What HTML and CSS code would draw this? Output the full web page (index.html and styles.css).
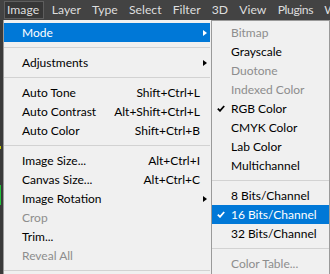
FILE: index.html
```html
<!DOCTYPE html>
<html>
<head>
<meta charset="utf-8">
<link rel="stylesheet" href="styles.css">
</head>
<body>
<div class="menubar">
  <span class="mb-item active">Image</span>
  <span class="mb-item">Layer</span>
  <span class="mb-item">Type</span>
  <span class="mb-item">Select</span>
  <span class="mb-item">Filter</span>
  <span class="mb-item">3D</span>
  <span class="mb-item">View</span>
  <span class="mb-item narrow">Plugins</span>
  <span class="mb-item">Window</span>
</div>
<div class="workspace">
  <div class="edge"></div>
  <div class="menu main-menu">
    <div class="row hl"><span class="label">Mode</span><span class="key"></span><span class="arrow-cell"><i class="arrow"></i></span></div>
    <div class="sep"></div>
    <div class="row"><span class="label">Adjustments</span><span class="key"></span><span class="arrow-cell"><i class="arrow"></i></span></div>
    <div class="sep"></div>
    <div class="row"><span class="label">Auto Tone</span><span class="key">Shift+Ctrl+L</span><span class="arrow-cell"></span></div>
    <div class="row"><span class="label">Auto Contrast</span><span class="key">Alt+Shift+Ctrl+L</span><span class="arrow-cell"></span></div>
    <div class="row"><span class="label">Auto Color</span><span class="key">Shift+Ctrl+B</span><span class="arrow-cell"></span></div>
    <div class="sep"></div>
    <div class="row"><span class="label">Image Size...</span><span class="key">Alt+Ctrl+I</span><span class="arrow-cell"></span></div>
    <div class="row"><span class="label">Canvas Size...</span><span class="key">Alt+Ctrl+C</span><span class="arrow-cell"></span></div>
    <div class="row"><span class="label">Image Rotation</span><span class="key"></span><span class="arrow-cell"><i class="arrow"></i></span></div>
    <div class="row dis"><span class="label">Crop</span><span class="key"></span><span class="arrow-cell"></span></div>
    <div class="row"><span class="label">Trim...</span><span class="key"></span><span class="arrow-cell"></span></div>
    <div class="row dis"><span class="label">Reveal All</span><span class="key"></span><span class="arrow-cell"></span></div>
    <div class="sep"></div>
  </div>
  <div class="menu sub-menu">
    <div class="srow dis"><span class="check"></span><span class="label">Bitmap</span></div>
    <div class="srow"><span class="check"></span><span class="label">Grayscale</span></div>
    <div class="srow dis"><span class="check"></span><span class="label">Duotone</span></div>
    <div class="srow dis"><span class="check"></span><span class="label">Indexed Color</span></div>
    <div class="srow"><span class="check"><svg width="8" height="7" viewBox="0 0 8 7"><path d="M0.8 3.6 L3 5.8 L7.2 1" fill="none" stroke="currentColor" stroke-width="1.8"/></svg></span><span class="label">RGB Color</span></div>
    <div class="srow"><span class="check"></span><span class="label">CMYK Color</span></div>
    <div class="srow"><span class="check"></span><span class="label">Lab Color</span></div>
    <div class="srow"><span class="check"></span><span class="label">Multichannel</span></div>
    <div class="sep"></div>
    <div class="srow"><span class="check"></span><span class="label">8 Bits/Channel</span></div>
    <div class="srow hl"><span class="check"><svg width="8" height="7" viewBox="0 0 8 7"><path d="M0.8 3.6 L3 5.8 L7.2 1" fill="none" stroke="currentColor" stroke-width="1.8"/></svg></span><span class="label">16 Bits/Channel</span></div>
    <div class="srow"><span class="check"></span><span class="label">32 Bits/Channel</span></div>
    <div class="sep"></div>
    <div class="srow dis"><span class="check"></span><span class="label">Color Table...</span></div>
  </div>
</div>
</body>
</html>
```
FILE: styles.css
```css
* { box-sizing: border-box; }
html, body { margin: 0; padding: 0; }
body {
  width: 330px;
  height: 274px;
  overflow: hidden;
  background: #3b3b3b;
  font-family: "Lato", "Liberation Sans", sans-serif;
}
.menubar {
  height: 20px;
  background: #434343;
  display: flex;
  align-items: center;
  padding-left: 4px;
  white-space: nowrap;
  overflow: hidden;
}
.mb-item {
  font-size: 12.2px;
  color: #dedede;
  padding: 0 4px 0 2px;
  margin-right: 3.2px;
  height: 18px;
  line-height: 16px;
  border: 1px solid transparent;
  flex: none;
}
.mb-item.narrow { letter-spacing: -0.4px; }
.mb-item.active {
  background: #373737;
  border-color: #5e5e5e;
  margin-right: 4.7px;
}
.workspace {
  display: flex;
  align-items: flex-start;
}
.edge {
  width: 3px;
  height: 254px;
  flex: none;
  background:
    linear-gradient(to bottom, transparent 126px, #c8c800 126px, #c8c800 129px, transparent 129px, transparent 165px, #22c33a 165px, #22c33a 185px, transparent 185px) left / 1px 100% no-repeat,
    #3a3a3a;
}
.menu {
  background: #f0f0f0;
  font-size: 12px;
  color: #000;
  flex: none;
}
.main-menu {
  width: 208px;
  height: 254px;
  border-left: 1px solid #9a9a9a;
  padding: 3px 1px 0 0;
}
.sub-menu {
  width: 119px;
  height: 254px;
  border: 1px solid #9a9a9a;
  border-bottom: none;
  padding-top: 2px;
}
.row, .srow {
  height: 19px;
  line-height: 19px;
  display: flex;
  align-items: center;
  white-space: nowrap;
}
.row { padding-left: 18px; }
.row .label { flex: 1; }
.row .key { text-align: right; }
.arrow-cell {
  width: 10px;
  flex: none;
  display: flex;
  align-items: center;
  padding-left: 3px;
}
.arrow {
  display: block;
  width: 0;
  height: 0;
  border-left: 4px solid #000;
  border-top: 3.5px solid transparent;
  border-bottom: 3.5px solid transparent;
}
.srow .check {
  width: 19px;
  flex: none;
  display: flex;
  align-items: center;
  padding-left: 5px;
}
.check svg { display: block; }
.hl { background: #0078d7; color: #fff; }
.hl .arrow { border-left-color: #fff; }
.dis { color: #8d8d8d; }
.sep {
  height: 11px;
  display: flex;
  align-items: center;
}
.sep::before {
  content: "";
  display: block;
  width: 100%;
  height: 1px;
  background: #d2d2d2;
}
```
